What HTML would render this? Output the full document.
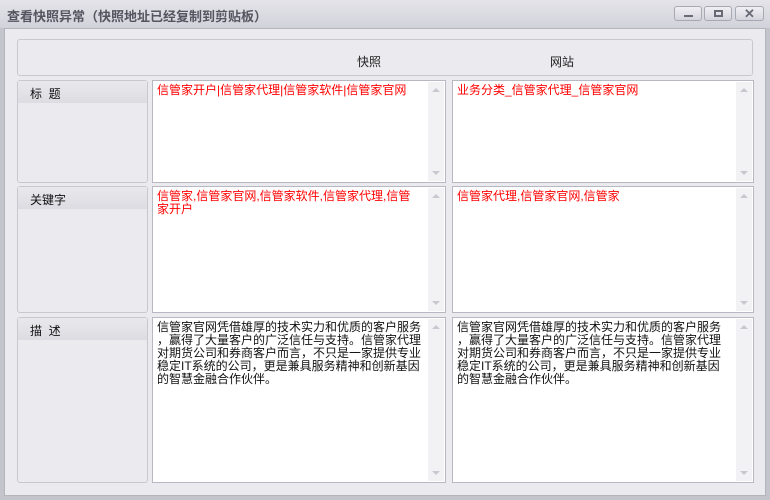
<!DOCTYPE html><html><head><meta charset="utf-8"><style>
*{margin:0;padding:0;box-sizing:border-box}
body{width:770px;height:500px;background:#c4c4cc;font-family:"Liberation Sans","Noto Sans CJK SC","WenQuanYi Zen Hei",sans-serif;font-size:12px;position:relative;overflow:hidden}
.title{position:absolute;left:0;top:0;width:770px;height:28px;background:linear-gradient(#e4e4ea,#d2d2da);}
.title span{position:absolute;left:7px;top:6px;font-size:13px;font-weight:bold;color:#555560}
.btn{position:absolute;top:6px;width:28px;height:15px;border:1px solid #a8a8b2;border-radius:3px;background:linear-gradient(#f0f0f4,#d4d4dc)}
.win{position:absolute;left:4px;top:28px;width:762px;height:468px;background:#ebebef;border:1px solid #b4b4bc}
.hdr{position:absolute;left:17px;top:39px;width:736px;height:37px;border:1px solid #c8c8d0;border-radius:3px;background:#ebebef}
.hdr span{position:absolute;top:13px;color:#222}
.lab{position:absolute;left:17px;width:131px;border:1px solid #c8c8d0;border-radius:3px;background:#ebebef}
.lab div{height:22px;background:linear-gradient(#e9e9ed,#dcdce2);padding:4px 0 0 12px;color:#111}
.ta{position:absolute;background:#fff;border:1px solid #b8b8c2;padding:3px 4px 0 4px;line-height:13px;color:#111;white-space:nowrap}
.ta.red{color:#f00}
.sb{position:absolute;right:1px;top:1px;bottom:1px;width:16px;background:#f2f2f4}
.sb:before{content:"";position:absolute;left:4px;top:6px;border:4px solid transparent;border-bottom:4px solid #c8c8d0;border-top:0}
.sb:after{content:"";position:absolute;left:4px;bottom:6px;border:4px solid transparent;border-top:4px solid #c8c8d0;border-bottom:0}
</style></head><body>
<div class="title"><span>查看快照异常（快照地址已经复制到剪贴板）</span></div>
<div class="btn" style="left:674px"><i style="position:absolute;left:9px;top:8px;width:9px;height:2px;background:#6a6a74"></i></div>
<div class="btn" style="left:704px"><i style="position:absolute;left:9px;top:3px;width:9px;height:7px;border:2px solid #6a6a74"></i></div>
<div class="btn" style="left:735px;width:29px"><i style="position:absolute;left:8px;top:-1px;font-style:normal;font-weight:bold;color:#6a6a74;font-size:13px">✕</i></div>
<div class="win"></div>
<div class="hdr"><span style="left:339px">快照</span><span style="left:532px">网站</span></div>

<div class="lab" style="top:80px;height:103px"><div>标&nbsp;&nbsp;题</div></div>
<div class="lab" style="top:186px;height:127px"><div>关键字</div></div>
<div class="lab" style="top:317px;height:166px"><div>描&nbsp;&nbsp;述</div></div>

<div class="ta red" style="left:152px;top:80px;width:294px;height:103px">信管家开户|信管家代理|信管家软件|信管家官网<div class="sb"></div></div>
<div class="ta red" style="left:452px;top:80px;width:302px;height:103px">业务分类_信管家代理_信管家官网<div class="sb"></div></div>
<div class="ta red" style="left:152px;top:186px;width:294px;height:127px">信管家,信管家官网,信管家软件,信管家代理,信管<br>家开户<div class="sb"></div></div>
<div class="ta red" style="left:452px;top:186px;width:302px;height:127px">信管家代理,信管家官网,信管家<div class="sb"></div></div>
<div class="ta" style="left:152px;top:317px;width:294px;height:166px">信管家官网凭借雄厚的技术实力和优质的客户服务<br>，赢得了大量客户的广泛信任与支持。信管家代理<br>对期货公司和券商客户而言，不只是一家提供专业<br>稳定IT系统的公司，更是兼具服务精神和创新基因<br>的智慧金融合作伙伴。<div class="sb"></div></div>
<div class="ta" style="left:452px;top:317px;width:302px;height:166px">信管家官网凭借雄厚的技术实力和优质的客户服务<br>，赢得了大量客户的广泛信任与支持。信管家代理<br>对期货公司和券商客户而言，不只是一家提供专业<br>稳定IT系统的公司，更是兼具服务精神和创新基因<br>的智慧金融合作伙伴。<div class="sb"></div></div>
</body></html>
